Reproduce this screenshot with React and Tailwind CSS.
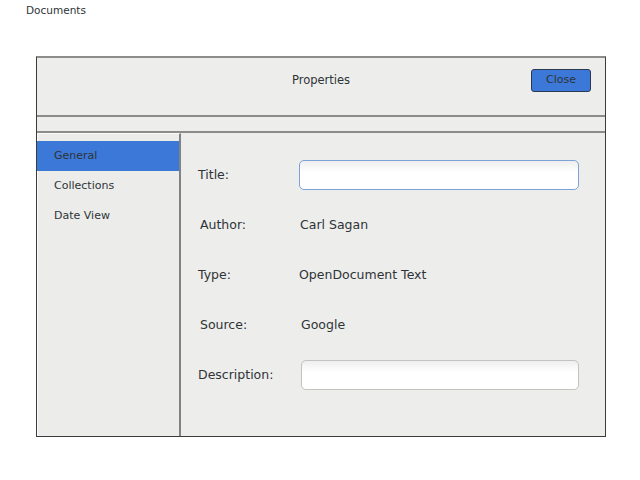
import React from 'react';

const FIELDS = [
    { label: 'Title:', input: true, focus: true, lx: 'pl-0', vx: 'pl-0' },
    { label: 'Author:', value: 'Carl Sagan', lx: 'pl-[2px]', vx: 'pl-[1px]' },
    { label: 'Type:', value: 'OpenDocument Text', lx: 'pl-0', vx: 'pl-0' },
    { label: 'Source:', value: 'Google', lx: 'pl-[2px]', vx: 'pl-[2px]' },
    { label: 'Description:', input: true, lx: 'pl-0', vx: 'pl-[2px]' },
];

const NAV = ['General', 'Collections', 'Date View'];

const App = () => {
    return (
        <div className="w-[640px] h-[480px] bg-white text-[#2e3436] font-['DejaVu_Sans',sans-serif]">
            <div className="pl-[26px] pt-[3px] h-[56px] text-[10.5px] leading-[14px]">Documents</div>

            <div className="ml-[36px] w-[570px] h-[381px] flex flex-col bg-[#ededec] border-t-2 border-t-[#8b8d8d] border-x border-b border-x-[#3a3c3c] border-b-[#3a3c3c]">
                {/* header */}
                <div className="h-[57px] pb-[12px] grid grid-cols-[1fr_auto_1fr] items-center">
                    <div />
                    <div className="text-[11.5px]">Properties</div>
                    <div className="flex justify-end pr-[14px]">
                        <button className="w-[60px] h-[23px] rounded-[3px] bg-[#3c78d8] border border-[#2b3a52] text-[11px] text-[#2e3436]">
                            Close
                        </button>
                    </div>
                </div>
                <div className="h-[2px] bg-[#8b8d8d]" />
                <div className="h-[14px]" />
                <div className="h-[2px] bg-[#8b8d8d]" />

                {/* body */}
                <div className="flex-1 flex">
                    <div className="w-[144px] border-r-2 border-[#7f8383] bg-[#ececeb] border-t border-t-[#fbfbfb] border-l border-l-[#fbfbfb] pt-[7px]">
                        {NAV.map((item, i) => (
                            <div
                                key={item}
                                className={
                                    'h-[30px] flex items-center text-[11px] ' +
                                    (i === 0 ? 'bg-[#3c78d8] -ml-px pl-[17px]' : 'pl-[16px]')
                                }
                            >
                                {item}
                            </div>
                        ))}
                    </div>

                    <div className="flex-1 pl-[17px] pt-[17px]">
                        {FIELDS.map((f) => (
                            <div key={f.label} className="h-[50px] grid grid-cols-[101px_280px] items-center text-[12.5px]">
                                <div className={f.lx}>{f.label}</div>
                                {f.input ? (
                                    <div className={f.vx}>
                                        <div
                                            className={
                                                'h-[30px] rounded-[5px] border bg-gradient-to-b from-[#eeeeee] via-white via-40% to-white ' +
                                                (f.focus ? 'border-[#7ea2d8] w-[280px]' : 'border-[#c2c3c0] w-[278px]')
                                            }
                                        />
                                    </div>
                                ) : (
                                    <div className={f.vx}>{f.value}</div>
                                )}
                            </div>
                        ))}
                    </div>
                </div>
            </div>
        </div>
    );
};

export default App;
